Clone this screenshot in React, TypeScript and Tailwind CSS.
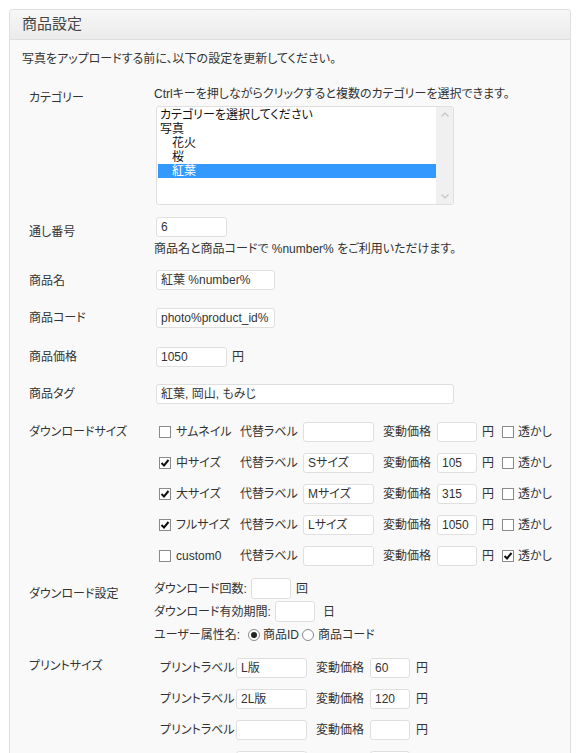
import React from "react";

const font = "font-['Liberation_Sans','Noto_Sans_CJK_JP',sans-serif] [font-feature-settings:'palt']";

function Input({ w, value = "", h = "h-[20px]" }: { w: string; value?: string; h?: string }) {
  return (
    <div
      className={`${w} ${h} shrink-0 rounded-[3px] border border-[#dfdfdf] bg-white pl-[4px] leading-[18px] text-[12px] text-[#333] overflow-hidden whitespace-nowrap`}
    >
      {value}
    </div>
  );
}

function Check({ on }: { on?: boolean }) {
  return (
    <span className="flex h-[12px] w-[12px] shrink-0 items-center justify-center border border-[#8a8a8a] bg-white">
      {on && (
        <svg width="10" height="10" viewBox="0 0 10 10">
          <path d="M1.5 5 L4 7.5 L8.5 2" fill="none" stroke="#111" strokeWidth="2" />
        </svg>
      )}
    </span>
  );
}

function Radio({ on }: { on?: boolean }) {
  return (
    <span className="flex h-[12px] w-[12px] shrink-0 items-center justify-center rounded-full border border-[#8a8a8a] bg-white">
      {on && <span className="h-[6px] w-[6px] rounded-full bg-[#222]" />}
    </span>
  );
}

const sizes = [
  { name: "サムネイル", on: false, alt: "", price: "", wm: false },
  { name: "中サイズ", on: true, alt: "Sサイズ", price: "105", wm: false },
  { name: "大サイズ", on: true, alt: "Mサイズ", price: "315", wm: false },
  { name: "フルサイズ", on: true, alt: "Lサイズ", price: "1050", wm: false },
  { name: "custom0", on: false, alt: "", price: "", wm: true },
];

const prints = [
  { label: "L版", price: "60" },
  { label: "2L版", price: "120" },
  { label: "", price: "" },
  { label: "", price: "" },
];

export default function App() {
  return (
    <div className={`h-[753px] overflow-hidden bg-white px-[9px] pt-[9px] text-[12px] text-[#333] ${font}`}>
      <div className="h-[800px] rounded-t-[3px] border border-[#dfdfdf] bg-[#f9f9f9]">
        {/* header */}
        <div className="flex h-[30px] items-center rounded-t-[3px] border-b border-[#dfdfdf] bg-gradient-to-b from-[#f7f7f7] to-[#ebebeb] px-[12px] text-[15px] text-[#464646]">
          商品設定
        </div>

        <div className="pl-[12px] pt-[11px]">
          <p className="leading-4">写真をアップロードする前に、以下の設定を更新してください。</p>

          {/* category */}
          <div className="mt-[19px] flex">
            <div className="ml-[7px] w-[127px] pt-[4px] leading-4">カテゴリー</div>
            <div className="-ml-[2px]">
              <p className="leading-4">Ctrlキーを押しながらクリックすると複数のカテゴリーを選択できます。</p>
              <div className="ml-[2px] mt-[4px] flex h-[99px] w-[298px] rounded-[3px] border border-[#dfdfdf] bg-white">
                <div className="flex-1 pl-[1px] pt-[1px] text-[12px] leading-[14px] text-[#111]">
                  <div className="pl-[2px]">カテゴリーを選択してください</div>
                  <div className="pl-[2px]">写真</div>
                  <div className="pl-[14px]">花火</div>
                  <div className="pl-[14px]">桜</div>
                  <div className="bg-[#3399ff] pl-[14px] text-white">紅葉</div>
                </div>
                <div className="flex w-[17px] flex-col items-center justify-between bg-[#f0f0f0] py-[5px]">
                  <svg width="8" height="5" viewBox="0 0 8 5">
                    <path d="M0.5 4.5 L4 1 L7.5 4.5" fill="none" stroke="#c4c4c4" strokeWidth="1.2" />
                  </svg>
                  <svg width="8" height="5" viewBox="0 0 8 5">
                    <path d="M0.5 0.5 L4 4 L7.5 0.5" fill="none" stroke="#c4c4c4" strokeWidth="1.2" />
                  </svg>
                </div>
              </div>
            </div>
          </div>

          {/* serial */}
          <div className="mt-[12px] flex">
            <div className="ml-[7px] w-[127px] pt-[7px] leading-4">通し番号</div>
            <div>
              <Input w="w-[71px]" value="6" />
              <p className="mt-[4px] -ml-[2px] leading-4">商品名と商品コードで %number% をご利用いただけます。</p>
            </div>
          </div>

          <div className="mt-[13px] flex">
            <div className="ml-[7px] w-[127px] pt-[3px] leading-4">商品名</div>
            <Input w="w-[119px]" value="紅葉 %number%" />
          </div>

          <div className="mt-[18px] flex">
            <div className="ml-[7px] w-[127px] pt-[2px] leading-4">商品コード</div>
            <Input w="w-[119px]" value="photo%product_id%" />
          </div>

          <div className="mt-[19px] flex items-start">
            <div className="ml-[7px] w-[127px] pt-[2px] leading-4">商品価格</div>
            <Input w="w-[71px]" value="1050" />
            <span className="ml-[5px] leading-[20px]">円</span>
          </div>

          <div className="mt-[17px] flex">
            <div className="ml-[7px] w-[127px] pt-[2px] leading-4">商品タグ</div>
            <Input w="w-[298px]" value="紅葉, 岡山, もみじ" />
          </div>

          {/* download sizes */}
          <div className="mt-[18px] flex">
            <div className="ml-[7px] w-[127px] pt-[2px] leading-4">ダウンロードサイズ</div>
            <div className="flex flex-col gap-[11px]">
              {sizes.map((s) => (
                <div key={s.name} className="flex h-[20px] items-center">
                  <span className="ml-[3px]">
                    <Check on={s.on} />
                  </span>
                  <span className="ml-[5px] w-[64px] whitespace-nowrap">{s.name}</span>
                  <span className="w-[63px] whitespace-nowrap">代替ラベル</span>
                  <Input w="w-[71px]" value={s.alt} />
                  <span className="ml-[9px] w-[54px]">変動価格</span>
                  <Input w="w-[40px]" value={s.price} />
                  <span className="ml-[5px]">円</span>
                  <span className="ml-[8px]">
                    <Check on={s.wm} />
                  </span>
                  <span className="ml-[4px] whitespace-nowrap">透かし</span>
                </div>
              ))}
            </div>
          </div>

          {/* download settings */}
          <div className="mt-[12px] flex">
            <div className="ml-[7px] w-[127px] pt-[8px] leading-4">ダウンロード設定</div>
            <div className="-ml-[2px] flex flex-col gap-[2px]">
              <div className="flex h-[21px] items-center">
                <span className="w-[97px] whitespace-nowrap">ダウンロード回数:</span>
                <Input w="w-[40px]" h="h-[21px]" />
                <span className="ml-[5px]">回</span>
              </div>
              <div className="flex h-[21px] items-center">
                <span className="w-[121px] whitespace-nowrap">ダウンロード有効期間:</span>
                <Input w="w-[40px]" h="h-[21px]" />
                <span className="ml-[8px]">日</span>
              </div>
              <div className="flex h-[21px] items-center">
                <span className="w-[94px] whitespace-nowrap">ユーザー属性名:</span>
                <Radio on />
                <span className="ml-[3px]">商品ID</span>
                <span className="ml-[3px]">
                  <Radio />
                </span>
                <span className="ml-[4px]">商品コード</span>
              </div>
            </div>
          </div>

          {/* print sizes */}
          <div className="mt-[13px] flex">
            <div className="ml-[7px] w-[127px] leading-4">プリントサイズ</div>
            <div className="flex flex-col gap-[11px]">
              {prints.map((p, i) => (
                <div key={i} className="flex h-[20px] items-center">
                  <span className="ml-[4px] w-[76px] whitespace-nowrap">プリントラベル</span>
                  <Input w="w-[71px]" value={p.label} />
                  <span className="ml-[9px] w-[54px]">変動価格</span>
                  <Input w="w-[40px]" value={p.price} />
                  <span className="ml-[6px]">円</span>
                </div>
              ))}
            </div>
          </div>
        </div>
      </div>
    </div>
  );
}
